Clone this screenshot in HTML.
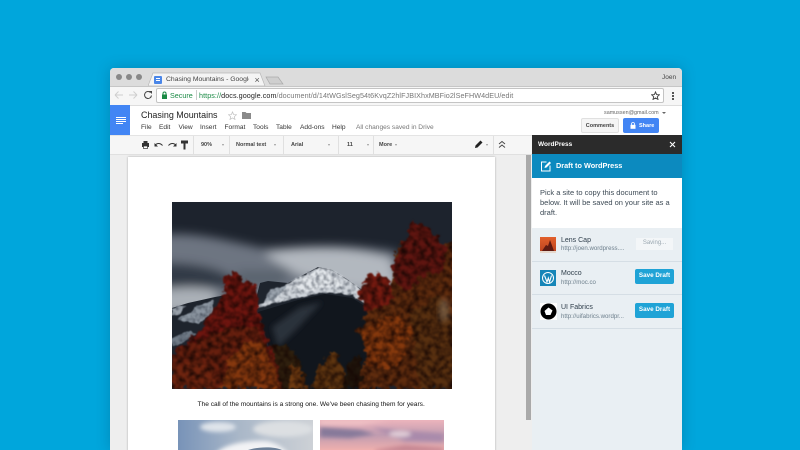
<!DOCTYPE html>
<html><head><meta charset="utf-8">
<style>
html,body{margin:0;padding:0;width:800px;height:450px;overflow:hidden;background:#00a6dc;font-family:"Liberation Sans",sans-serif;}
.a{position:absolute;white-space:nowrap;}
#win{position:absolute;left:110px;top:68px;width:572px;height:382px;background:#fff;border-radius:4px 4px 0 0;overflow:hidden;box-shadow:0 0 14px rgba(0,60,90,.28);}
#root{position:absolute;left:0;top:0;width:800px;height:450px;overflow:hidden;filter:blur(.3px);}
.m{font-size:6.6px;color:#333;top:124px;}
.tb{font-size:5.5px;font-weight:bold;color:#444;top:141.5px;}
.sep{position:absolute;top:136px;width:1px;height:18px;background:#e0e0e0;}
.car{position:absolute;top:143.500px;width:0;height:0;border-left:1.5px solid transparent;border-right:1.5px solid transparent;border-top:2px solid #999;}
.site{position:absolute;left:532px;width:150px;height:33px;border-bottom:1px solid #d5dee5;}
.btn{position:absolute;left:635px;width:39px;height:15px;background:#1fa3d6;border-radius:2px;color:#fff;font-size:6.3px;font-weight:bold;text-align:center;line-height:14.5px;}
.u{font-size:6.100px;color:#6d7f8c;left:561px;}
.n{font-size:7px;color:#2e3d4a;left:561px;}
</style></head><body>
<div id="root">
<div id="win"></div>
<!-- tab strip -->
<div class="a" style="left:110px;top:68px;width:572px;height:18px;background:#dcdcdc;border-radius:4px 4px 0 0;"></div>
<div class="a" style="left:116px;top:74px;width:6px;height:6px;border-radius:50%;background:#888;"></div>
<div class="a" style="left:126px;top:74px;width:6px;height:6px;border-radius:50%;background:#888;"></div>
<div class="a" style="left:136px;top:74px;width:6px;height:6px;border-radius:50%;background:#888;"></div>
<svg class="a" style="left:148px;top:72px" width="140" height="15" viewBox="0 0 140 15"><path d="M0 14 L5 1 H112 L117 14 Z" fill="#f4f4f4" stroke="#b8b8b8" stroke-width=".7"/><path d="M118 5 H130 L135 12 H122 Z" fill="#cfcfcf" stroke="#aaa" stroke-width=".7"/></svg>
<div class="a" style="left:154px;top:76px;width:8px;height:8px;background:#4a86e8;border-radius:1px;"></div>
<div class="a" style="left:156px;top:78px;width:4px;height:1px;background:#fff;box-shadow:0 2px 0 #fff;"></div>
<div class="a" style="left:166px;top:75.500px;width:83px;overflow:hidden;font-size:6.800px;color:#444;">Chasing Mountains - Google Docs</div>
<div class="a" style="left:254.500px;top:74.500px;font-size:9px;color:#555;line-height:10px;">×</div>
<div class="a" style="left:662px;top:74px;font-size:6.500px;color:#444;">Joen</div>
<!-- address bar -->
<div class="a" style="left:110px;top:86px;width:572px;height:19px;background:#f6f6f6;border-top:1px solid #c6c6c6;box-sizing:border-box;"></div>
<svg class="a" style="left:112px;top:88px" width="44" height="14" viewBox="0 0 44 14" fill="none"><path d="M3 7H11M3 7L6.500 3.500M3 7L6.500 10.500" stroke="#cfcfcf" stroke-width="1"/><path d="M17 7H25M25 7L21.500 3.500M25 7L21.500 10.500" stroke="#cfcfcf" stroke-width="1"/><path d="M38.500 4.500A3.500 3.500 0 1 0 39.500 7.500" stroke="#444" stroke-width="1"/><path d="M37 3H40V6Z" fill="#444"/></svg>
<div class="a" style="left:156px;top:88px;width:508px;height:15px;background:#fff;border:1px solid #c4c4c4;border-radius:2px;box-sizing:border-box;"></div>
<svg class="a" style="left:161px;top:91px" width="7" height="9" viewBox="0 0 7 9"><rect x="1" y="3.500" width="5" height="4.500" fill="#1a8a44"/><path d="M2 4V2.500A1.500 1.500 0 0 1 5 2.500V4" fill="none" stroke="#1a8a44"/></svg>
<div class="a" style="left:170px;top:91px;font-size:7.200px;color:#1a8a44;">Secure</div>
<div class="a" style="left:195.500px;top:90px;width:1px;height:10px;background:#ccc;"></div>
<div class="a" style="left:199px;top:91px;font-size:7.200px;color:#777;letter-spacing:.07px;"><span style="color:#1a8a44">https://</span><span style="color:#222">docs.google.com</span>/document/d/14tWGslSeg54t6KvqZ2hlFJBIXhxMBFio2lSeFHW4dEU/edit</div>
<svg class="a" style="left:651px;top:91px" width="9" height="9" viewBox="0 0 24 24"><path d="M12 2.500L15 9.500L22.500 10L16.800 15L18.600 22.500L12 18.500L5.400 22.500L7.200 15L1.500 10L9 9.500Z" fill="none" stroke="#444" stroke-width="2.500"/></svg>
<div class="a" style="left:672px;top:92px;width:1.500px;height:1.500px;background:#555;box-shadow:0 3px 0 #555,0 6px 0 #555;"></div>
<!-- docs header -->
<div class="a" style="left:110px;top:105px;width:572px;height:30px;background:#fff;border-top:1px solid #ddd;box-sizing:border-box;"></div>
<div class="a" style="left:110px;top:105px;width:20px;height:30px;background:#4285f4;"></div>
<div class="a" style="left:116px;top:116.500px;width:10px;height:1px;background:#fff;box-shadow:0 2px 0 #fff,0 4px 0 #fff;"></div>
<div class="a" style="left:116px;top:122.500px;width:7px;height:1px;background:#fff;"></div>
<div class="a" style="left:141px;top:110px;font-size:8.950px;color:#222;">Chasing Mountains</div>
<svg class="a" style="left:228px;top:110.500px" width="9" height="9" viewBox="0 0 24 24"><path d="M12 2.500L15 9.500L22.500 10L16.800 15L18.600 22.500L12 18.500L5.400 22.500L7.200 15L1.500 10L9 9.500Z" fill="none" stroke="#c4c4c4" stroke-width="2"/></svg>
<svg class="a" style="left:242px;top:111px" width="9" height="8" viewBox="0 0 9 8"><path d="M0 1H3.500L4.500 2H9V8H0Z" fill="#8a8a8a"/></svg>
<div class="a m" style="left:141px;">File</div>
<div class="a m" style="left:159px;">Edit</div>
<div class="a m" style="left:178.500px;">View</div>
<div class="a m" style="left:200px;">Insert</div>
<div class="a m" style="left:224.500px;">Format</div>
<div class="a m" style="left:253px;">Tools</div>
<div class="a m" style="left:276px;">Table</div>
<div class="a m" style="left:300px;">Add-ons</div>
<div class="a m" style="left:332px;">Help</div>
<div class="a m" style="left:356px;color:#777;">All changes saved in Drive</div>
<div class="a" style="left:604px;top:109.500px;font-size:5.400px;color:#666;">samussen@gmail.com</div>
<div class="a" style="left:662px;top:111.500px;width:0;height:0;border-left:2px solid transparent;border-right:2px solid transparent;border-top:2.500px solid #666;"></div>
<div class="a" style="left:581px;top:118px;width:38px;height:15px;background:#f5f5f5;border:1px solid #e0e0e0;box-sizing:border-box;border-radius:2px;font-size:5.500px;font-weight:bold;color:#444;text-align:center;line-height:14px;">Comments</div>
<div class="a" style="left:623px;top:118px;width:36px;height:15px;background:#4285f4;border-radius:2px;"></div>
<svg class="a" style="left:630px;top:122px" width="6" height="7" viewBox="0 0 6 7"><rect x=".5" y="2.800" width="5" height="4" fill="#fff"/><path d="M1.500 3V2A1.500 1.500 0 0 1 4.500 2V3" fill="none" stroke="#fff" stroke-width=".8"/></svg>
<div class="a" style="left:639px;top:122.500px;font-size:5.500px;font-weight:bold;color:#fff;">Share</div>
<!-- toolbar -->
<div class="a" style="left:110px;top:135px;width:422px;height:20px;background:#f6f6f6;border-top:1px solid #e4e4e4;border-bottom:1px solid #e0e0e0;box-sizing:border-box;"></div>
<svg class="a" style="left:140px;top:138px" width="52" height="14" viewBox="0 0 52 14"><rect x="2" y="5" width="7" height="4" fill="#333"/><rect x="3.500" y="3" width="4" height="2" fill="#333"/><rect x="3.500" y="8" width="4" height="2.500" fill="#fff" stroke="#333" stroke-width=".7"/><path d="M15 8C16 5 20 4.500 22.500 7.500" fill="none" stroke="#333"/><path d="M14.500 5V8.500H18Z" fill="#333"/><path d="M36 8C35 5 31 4.500 28.500 7.500" fill="none" stroke="#333"/><path d="M36.500 5V8.500H33Z" fill="#333"/><rect x="41" y="2.500" width="7" height="3" fill="#333"/><rect x="43.500" y="5.500" width="2" height="6" fill="#333"/></svg>
<div class="sep" style="left:193px"></div><div class="sep" style="left:229px"></div><div class="sep" style="left:283px"></div><div class="sep" style="left:338px"></div><div class="sep" style="left:373px"></div>
<div class="a tb" style="left:201px;">90%</div><div class="car" style="left:222px"></div>
<div class="a tb" style="left:236px;">Normal text</div><div class="car" style="left:274px"></div>
<div class="a tb" style="left:291px;">Arial</div><div class="car" style="left:328px"></div>
<div class="a tb" style="left:347px;">11</div><div class="car" style="left:367px"></div>
<div class="a tb" style="left:379px;">More</div><div class="car" style="left:395px"></div>
<svg class="a" style="left:474px;top:139px" width="10" height="10" viewBox="0 0 10 10"><path d="M1 9L1.500 6.500L6.500 1.500L8.500 3.500L3.500 8.500Z" fill="#222"/></svg>
<div class="car" style="left:486px;"></div>
<div class="sep" style="left:493px"></div>
<svg class="a" style="left:498px;top:140px" width="8" height="9" viewBox="0 0 8 9" fill="none" stroke="#444" stroke-width=".9"><path d="M1 4L4 1.500L7 4M1 7.500L4 5L7 7.500"/></svg>
<!-- document area -->
<div class="a" style="left:110px;top:155px;width:422px;height:295px;background:#eeeeee;"></div>
<div class="a" style="left:128px;top:156.500px;width:367px;height:294px;background:#fff;box-shadow:0 0 2px rgba(0,0,0,.3);"></div>
<div class="a" style="left:526px;top:155px;width:5px;height:265px;background:#a9a9a9;"></div>
<!-- hero photo -->
<svg class="a" style="left:172px;top:202px" width="280" height="187" viewBox="0 0 280 187">
<defs>
<filter id="b6" x="-30%" y="-50%" width="160%" height="200%"><feGaussianBlur stdDeviation="5"/></filter>
<filter id="b3" x="-30%" y="-30%" width="160%" height="160%"><feGaussianBlur stdDeviation="3"/></filter>
<filter id="tree" x="-10%" y="-10%" width="120%" height="120%" color-interpolation-filters="sRGB">
<feTurbulence type="fractalNoise" baseFrequency=".16" numOctaves="3" seed="4" result="n"/>
<feDisplacementMap in="SourceGraphic" in2="n" scale="12" xChannelSelector="R" yChannelSelector="G" result="d"/>
<feTurbulence type="fractalNoise" baseFrequency=".17" numOctaves="3" seed="7" result="t"/>
<feColorMatrix in="t" type="matrix" values="0 0 0 0 .08  0 0 0 0 .02  0 0 0 0 .01  1.800 0 0 0 -.6" result="tt"/>
<feComposite in="tt" in2="d" operator="in" result="shade"/>
<feMerge result="o"><feMergeNode in="d"/><feMergeNode in="shade"/></feMerge>
<feGaussianBlur in="o" stdDeviation=".7"/>
</filter>
<filter id="rock" x="-10%" y="-10%" width="120%" height="120%" color-interpolation-filters="sRGB">
<feTurbulence type="fractalNoise" baseFrequency=".14" numOctaves="2" seed="12" result="n"/>
<feDisplacementMap in="SourceGraphic" in2="n" scale="4" xChannelSelector="R" yChannelSelector="G" result="d"/>
<feTurbulence type="fractalNoise" baseFrequency=".25" numOctaves="2" seed="3" result="t"/>
<feColorMatrix in="t" type="matrix" values="0 0 0 0 .2  0 0 0 0 .23  0 0 0 0 .28  1.400 0 0 0 -.55" result="tt"/>
<feComposite in="tt" in2="d" operator="in" result="shade"/>
<feMerge result="o"><feMergeNode in="d"/><feMergeNode in="shade"/></feMerge>
<feGaussianBlur in="o" stdDeviation=".5"/>
</filter>
<clipPath id="c"><rect width="280" height="187"/></clipPath>
</defs>
<g clip-path="url(#c)">
<rect width="280" height="187" fill="#1d232d"/>
<g filter="url(#b6)">
<path d="M-20 34C20 28 50 38 90 46C130 46 170 40 225 50L235 100H-20Z" fill="#6d7581"/>
<path d="M92 52C130 42 180 44 218 56L228 92L170 85L125 72Z" fill="#b2b8bf"/>
<path d="M-20 60C20 60 55 64 72 86H-20Z" fill="#333b47"/>
<path d="M-20 90C10 84 32 84 44 90L46 112H-20Z" fill="#aab0b7"/>
<path d="M62 68H120L108 84H74Z" fill="#5a636e"/>
</g>
<!-- back mountain -->
<path d="M0 106L16 101L43 95L60 92L83 101L88 81L96 79L116 81L146 65L160 68L175 77L193 90L198 110L205 187H0Z" fill="#1e242d"/>
<g filter="url(#rock)">
<path d="M83 106L105 92L116 81L146 65L160 68L175 77L193 90L195 103L180 93L153 90L126 96Z" fill="#cfd4da"/>
<path d="M118 85L146 67L158 71L172 84L150 86L130 91Z" fill="#e4e8ec"/>
<path d="M98 88L116 83L104 96L92 100Z" fill="#9aa3ad"/>
<path d="M6 118L26 104L42 98L40 112L26 122Z" fill="#8c96a1"/>
<path d="M0 106L14 103L8 112L0 114Z" fill="#9aa2ab"/>
<path d="M0 136L18 128L24 132L10 142L0 144Z" fill="#707b87"/>
</g>
<path d="M86 110L126 98L153 92L180 96L196 106L205 187H110Z" fill="#11161d"/>
<path d="M100 125L128 105L150 100L124 128L106 145Z" fill="#2a313b" filter="url(#b3)"/>
<!-- foreground trees -->
<g filter="url(#tree)">
<path d="M92 187L96 145L110 142L122 148L136 187Z" fill="#2f200e"/>
<path d="M116 187L120 160L128 168L136 187Z" fill="#6e3a10"/>
<path d="M138 187L150 162L162 148L172 168L176 187Z" fill="#5e3510"/>
<path d="M172 187L176 160L188 152L196 187Z" fill="#1f150b"/>
<!-- left tree -->
<path d="M0 187V150L13 143L21 133L30 130L36 118L43 103L53 90L50 78L58 70L65 71L75 80L83 83L86 106L93 133L98 145L106 166L110 187Z" fill="#6e150f"/>
<path d="M0 187V152L20 140L36 134L60 125L84 125L94 140L106 168L110 187Z" fill="#661f0e"/>
<path d="M50 187L56 160L74 140L92 140L102 165L108 187Z" fill="#86380e"/>
<path d="M0 187V165L24 158L42 170L44 187Z" fill="#6e240f"/>
<!-- right tree -->
<path d="M186 93L195 75L206 70L220 83L223 53L233 36L241 21L251 21L270 43L280 40L284 60V187H186L196 153L186 130L196 113Z" fill="#5f2c0e"/>
<path d="M221 62L233 36L241 21L251 21L270 43L276 44L270 70L250 74L236 90L224 84Z" fill="#5f1510"/>
<path d="M186 93L195 75L206 70L220 83L224 95L204 108L194 110Z" fill="#751a10"/>
<path d="M190 130L205 118L228 112L240 130L225 165L196 165Z" fill="#86390d"/>
<path d="M238 110L268 94L284 120V187H248Z" fill="#583010"/>
</g>
<g filter="url(#b3)"><ellipse cx="272" cy="108" rx="5" ry="12" fill="#a99a80" opacity=".4"/></g>
</g>
</svg>
<div class="a" style="left:197.500px;top:401px;font-size:6.600px;color:#111;">The call of the mountains is a strong one. We've been chasing them for years.</div>
<!-- lower photos -->
<svg class="a" style="left:178px;top:420px" width="135" height="30" viewBox="0 0 135 30">
<defs><linearGradient id="l1" x1="0" y1="0" x2="1" y2="0"><stop offset="0" stop-color="#7893b8"/><stop offset=".45" stop-color="#a9b7c8"/><stop offset="1" stop-color="#cdd1d6"/></linearGradient><filter id="b2" x="-20%" y="-40%" width="140%" height="180%"><feGaussianBlur stdDeviation="2"/></filter></defs>
<rect width="135" height="30" fill="url(#l1)"/>
<g filter="url(#b2)"><ellipse cx="40" cy="7" rx="18" ry="5" fill="#dfe4ea"/><path d="M36 36C42 24 70 20 88 21C100 23 108 30 112 36Z" fill="#f2f3f5"/><ellipse cx="105" cy="9" rx="30" ry="8" fill="#dcdfe2"/></g>
<path d="M70 30C78 27 96 26 104 30Z" fill="#6d8199"/>
</svg>
<svg class="a" style="left:320px;top:420px" width="124" height="30" viewBox="0 0 124 30">
<defs><linearGradient id="l2" x1="0" y1="0" x2="0" y2="1"><stop offset="0" stop-color="#ecb4bc"/><stop offset=".5" stop-color="#c09cb0"/><stop offset="1" stop-color="#efb0ae"/></linearGradient></defs>
<rect width="124" height="30" fill="url(#l2)"/>
<g filter="url(#b2)"><path d="M0 7L40 10L55 14L30 18L0 17Z" fill="#86799a"/><path d="M52 8L124 14V22L85 21Z" fill="#a98aab"/><ellipse cx="80" cy="14" rx="11" ry="3" fill="#e2cfd8"/><path d="M0 0H70L40 5H0Z" fill="#f0c2c6"/><path d="M55 30L85 25L124 28V32H55Z" fill="#c48592"/></g>
</svg>
<!-- side panel -->
<div class="a" style="left:532px;top:135px;width:150px;height:315px;background:#e9eff3;"></div>
<div class="a" style="left:532px;top:135px;width:150px;height:19px;background:#2b2b2b;"></div>
<div class="a" style="left:538px;top:141px;font-size:6.500px;font-weight:bold;color:#fff;">WordPress</div>
<svg class="a" style="left:669px;top:141px" width="7" height="7" viewBox="0 0 7 7"><path d="M1 1L6 6M6 1L1 6" stroke="#fff" stroke-width="1.100"/></svg>
<div class="a" style="left:532px;top:154px;width:150px;height:24px;background:#0c8abf;"></div>
<svg class="a" style="left:540px;top:160px" width="12" height="12" viewBox="0 0 12 12" fill="none" stroke="#fff"><path d="M6.500 2H1.500V11H10V5.500"/><path d="M4.500 8L5 6L9.500 1.500L11 3L6.500 7.500Z" fill="#fff" stroke="none"/></svg>
<div class="a" style="left:556px;top:160.500px;font-size:7.300px;font-weight:bold;color:#fff;">Draft to WordPress</div>
<div class="a" style="left:532px;top:178px;width:150px;height:50px;background:#fff;"></div>
<div class="a" style="left:540px;top:187.500px;font-size:7.500px;line-height:10.400px;color:#3d4a55;">Pick a site to copy this document to<br>below. It will be saved on your site as a<br>draft.</div>
<div class="site" style="top:228px;"></div>
<div class="site" style="top:261px;"></div>
<div class="site" style="top:295px;"></div>
<svg class="a" style="left:540px;top:237px" width="16" height="16" viewBox="0 0 16 16"><defs><linearGradient id="lc" x1="0" y1="0" x2="0" y2="1"><stop offset="0" stop-color="#e2602c"/><stop offset="1" stop-color="#b8401e"/></linearGradient></defs><rect width="16" height="16" fill="url(#lc)"/><path d="M2 14L6 8L8 9L10 3L14 14Z" fill="#5e1a12"/><rect y="14" width="16" height="2" fill="#e6d8cc"/></svg>
<div class="a n" style="top:236.500px;">Lens Cap</div>
<div class="a u" style="top:245px;">http://joen.wordpress....</div>
<div class="a" style="left:636px;top:238px;width:37px;height:12px;background:#f3f6f8;font-size:6px;color:#9aa7b0;text-align:center;line-height:11.500px;">Saving...</div>
<svg class="a" style="left:540px;top:270px" width="16" height="16" viewBox="0 0 16 16"><rect width="16" height="16" fill="#1686b8"/><circle cx="8" cy="8" r="5.500" fill="none" stroke="#fff" stroke-width="1"/><path d="M4.500 5.500L7 12L8.300 8L9.500 12L11.500 5.500" fill="none" stroke="#fff" stroke-width="1.100"/></svg>
<div class="a n" style="top:270px;">Mocco</div>
<div class="a u" style="top:279px;">http://moc.co</div>
<div class="btn" style="top:269px;">Save Draft</div>
<svg class="a" style="left:540px;top:303px" width="17" height="17" viewBox="0 0 17 17"><rect width="17" height="17" fill="#fff"/><circle cx="8.500" cy="8.500" r="8" fill="#000"/><path d="M8.500 4.500L12.500 7.500L10.500 12L6 12L4.500 8Z" fill="#fff"/></svg>
<div class="a n" style="top:303.500px;">UI Fabrics</div>
<div class="a u" style="top:312.500px;">http://uifabrics.wordpr...</div>
<div class="btn" style="top:303px;">Save Draft</div>
</div>
</body></html>
